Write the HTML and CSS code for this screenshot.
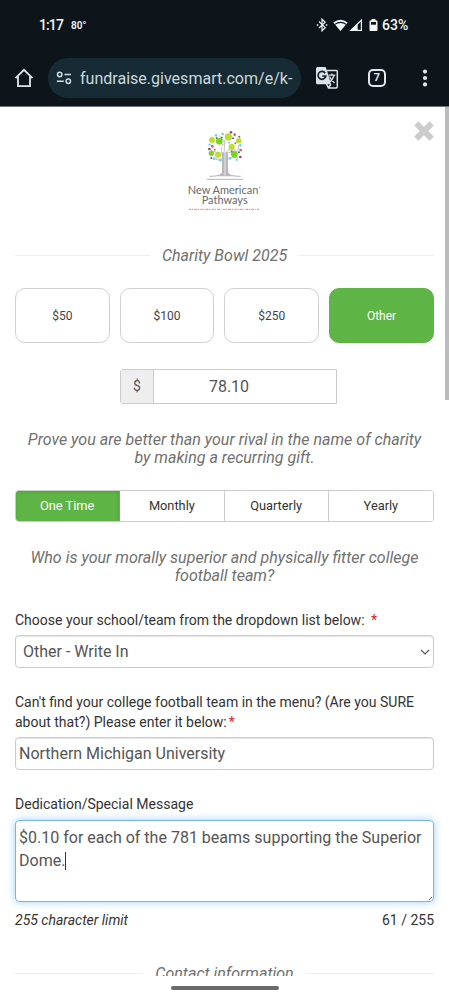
FILE: index.html
```html
<!DOCTYPE html>
<html lang="en">
<head>
<meta charset="utf-8">
<meta name="viewport" content="width=device-width, initial-scale=1">
<title>Charity Bowl 2025</title>
<link rel="stylesheet" href="styles.css">
</head>
<body>
<div class="phone">
  <header class="chrome">
    <div class="status">
      <span class="clock">1:17</span><span class="temp">80°</span>
      <svg class="signals" width="62" height="16" viewBox="0 0 62 16">
        <g fill="none" stroke="#f2f5f6" stroke-width="1.2"><path d="M3 4.500l6.200 6.200L6 13.800V2.200l3.200 3.100L3 11"/></g>
        <path fill="#f2f5f6" d="M.8 7.300h1.500v1.500H.8zM9.800 7.300h1.500v1.500H9.800z"/>
        <path fill="#f2f5f6" d="M17.300 5.500Q24.500-.1 31.700 5.500L24.500 14z"/>
        <path fill="none" stroke="#0d151b" stroke-width="1.100" d="M18.800 7.400Q24.500 3.300 30.200 7.400"/>
        <path fill="none" stroke="#f2f5f6" stroke-width="1.200" d="M34.800 13.400H45.400V3.200z"/>
        <path fill="#f2f5f6" d="M34 14h7.600V6.600z"/>
        <path fill="#f2f5f6" d="M55.500 2h4v1.500h1.300q.7 0 .7.700v9.100q0 .7-.7.700h-6.600q-.7 0-.7-.7V4.200q0-.7.700-.7h1.300z"/>
        <path fill="#0d151b" d="M55 5h5v2.700h-5z"/>
      </svg>
      <span class="battery">63%</span>
    </div>
    <div class="toolbar">
      <svg class="home" width="20" height="20" viewBox="0 0 20 20" fill="none" stroke="#e0e6ec" stroke-width="1.800"><path d="M1.500 10.200L10 1.800l8.500 8.400M4 8.500v9.700h12V8.500"/></svg>
      <div class="address">
        <svg width="16" height="14" viewBox="0 0 16 14" fill="none" stroke="#cfdde2" stroke-width="1.500"><circle cx="3.700" cy="3.500" r="2.200"/><path d="M8.500 3.500H15M.8 10.300h7"/><circle cx="12.300" cy="10.300" r="2.200"/></svg>
        <span>fundraise.givesmart.com/e/k-</span>
      </div>
      <svg class="translate" width="24" height="24" viewBox="0 0 24 24">
        <path fill="#dce2ea" d="M2.500 1h8l1.400 3.500 4.200 13.800H2.500Q1 18.300 1 16.800V2.500Q1 1 2.500 1z"/>
        <path fill="none" stroke="#dce2ea" stroke-width="1.500" d="M11.500 4.500H21q1.300 0 1.300 1.300v14.900q0 1.300-1.300 1.300h-7.500l-2-4M16 18l-2.600 4"/>
        <path fill="none" stroke="#17232c" stroke-width="1.700" d="M10.200 7.200A3.900 3.900 0 1 0 10.800 10H7.200"/>
        <path fill="none" stroke="#dce2ea" stroke-width="1.300" d="M13.500 9.200h6.800M16.800 7.600v1.600M19 9.500q-1.300 4.300-4.500 6.500M14.500 10.500q2 4.200 5 6.500"/>
      </svg>
      <span class="tabs">7</span>
      <svg class="menu" width="6" height="18" viewBox="0 0 6 18" fill="#e0e6ec"><circle cx="3" cy="2.600" r="2.100"/><circle cx="3" cy="9" r="2.100"/><circle cx="3" cy="15.400" r="2.100"/></svg>
    </div>
  </header>

  <main class="page">
    <div class="scrollbar"></div>
    <svg class="close" width="22" height="22" viewBox="0 0 22 22"><path d="M3.300 3.300l15.400 15.400M18.700 3.300L3.300 18.700" stroke="#ccc" stroke-width="6"/></svg>
    <svg class="logo" width="110" height="105" viewBox="0 0 330 315">
      <g fill="none" stroke="#c4c4c7" stroke-width="3">
        <path d="M158 180V125q0-10-12-12l-18-4q-8-2-8-10M155 114V95M158 132h-28M163 180V75M168 180V110l12-12M172 180v-40q0-12 14-12h18M174 112h22q9 0 9-12V90M163 92l-25-14M168 86l-20-25M155 135q-18 2-18-8M176 105h22"/>
        <path stroke="#b4b4b7" stroke-width="3" d="M110 193h110M118 184q38 0 40-12M212 184q-38 0-40-12"/>
      </g>
      <path fill="#b9b9bb" d="M156 112h18v56q1 12 15 16h-48q15-4 15-16z"/>
      <path stroke="#fff" stroke-width="2" d="M165 108v74"/>
      <g fill="#bbdf2c"><circle cx="126" cy="75" r="9"/><circle cx="175" cy="66" r="11"/><circle cx="206" cy="77" r="8"/><circle cx="185" cy="95" r="9"/><circle cx="144" cy="119" r="9"/></g>
      <g fill="#76d51c"><circle cx="148" cy="79" r="10"/><circle cx="124" cy="115" r="8"/><circle cx="193" cy="118" r="10"/></g>
      <g fill="#6fd4ee"><circle cx="138" cy="61" r="4"/><circle cx="158" cy="57" r="4"/><circle cx="119" cy="89" r="3.500"/><circle cx="211" cy="91" r="4"/><circle cx="132" cy="131" r="4"/><circle cx="151" cy="136" r="4"/><circle cx="180" cy="130" r="4"/><circle cx="200" cy="134" r="3.500"/><circle cx="177" cy="83" r="3"/></g>
      <g fill="#974a76"><circle cx="183" cy="52" r="4"/><circle cx="208" cy="65" r="3"/><circle cx="118" cy="102" r="4"/><circle cx="211" cy="126" r="4"/><circle cx="140" cy="69" r="3"/></g>
      <g fill="#e65a36"><circle cx="194" cy="59" r="4"/><circle cx="127" cy="94" r="4"/><circle cx="134" cy="104" r="3"/><circle cx="196" cy="85" r="3"/><circle cx="185" cy="109" r="3"/><circle cx="212" cy="105" r="4"/></g>
      <g fill="#435ccb"><circle cx="189" cy="70" r="3"/><circle cx="155" cy="68" r="3"/><circle cx="124" cy="129" r="3"/><circle cx="207" cy="112" r="3"/></g>
      <g fill="#68696c" font-family="Lato, sans-serif" font-size="34">
        <text x="53" y="238" textLength="212" lengthAdjust="spacingAndGlyphs">New American</text><text x="95" y="268" textLength="138" lengthAdjust="spacingAndGlyphs">Pathways</text>
      </g>
      <path d="M269 214v6" stroke="#777" stroke-width="2"/>
      <path d="M57 283h210" stroke="#d98b79" stroke-width="3" stroke-dasharray="7 2 4 3 9 2 3 4"/>
    </svg>
    <h1 class="divider"><span>Charity Bowl 2025</span></h1>
    <div class="amounts">
      <button>$50</button><button>$100</button><button>$250</button><button class="selected">Other</button>
    </div>
    <div class="custom"><span class="currency">$</span><span class="value">78.10</span></div>
    <p class="prompt recurring">Prove you are better than your rival in the name of charity<br>by making a recurring gift.</p>
    <div class="frequency">
      <button class="active">One Time</button><button>Monthly</button><button>Quarterly</button><button>Yearly</button>
    </div>
    <p class="prompt rival">Who is your morally superior and physically fitter college<br>football team?</p>
    <div class="label">Choose your school/team from the dropdown list below: <span class="required spaced">*</span></div>
    <div class="field select"><span>Other - Write In</span><svg width="10" height="7" viewBox="0 0 10 7" fill="none" stroke="#555" stroke-width="1.100"><path d="M1 1l4 4 4-4"/></svg></div>
    <div class="label second">Can't find your college football team in the menu? (Are you SURE<br>about that?) Please enter it below:<span class="required near">*</span></div>
    <div class="field">Northern Michigan University</div>
    <div class="label third">Dedication/Special Message</div>
    <div class="message">$0.10 for each of the 781 beams supporting the Superior<br>Dome.<span class="caret"></span><svg class="grip" width="3" height="3"><path d="M0 3l3-3" stroke="#666"/></svg></div>
    <div class="limit"><em>255 character limit</em><span>61 / 255</span></div>
    <h2 class="divider contact"><span>Contact information</span></h2>
  </main>
  <footer class="gesture"><div></div></footer>
</div>
</body>
</html>
```
FILE: styles.css
```css
* { box-sizing: border-box; }
body { margin: 0; background: #fff; font-family: Roboto, "Liberation Sans", sans-serif; }
button { font-family: inherit; margin: 0; padding: 0; }
.phone { width: 449px; height: 1000px; display: flex; flex-direction: column; overflow: hidden; background: #fff; }
.chrome { height: 107px; flex: none; background: #0d151b; border-bottom: 1px solid #69757a; }
.status { display: flex; align-items: center; height: 50px; padding: 0 39px 0 39px; color: #f2f5f6; }
.clock { width: 32px; font-size: 14px; font-weight: 500; letter-spacing: -0.9px; white-space: nowrap; }
.temp { font-size: 10px; font-weight: 600; }
.signals { margin-left: auto; margin-right: 4px; }
.battery { font-size: 14px; font-weight: 500; width: 28px; white-space: nowrap; }
.toolbar { display: flex; align-items: center; height: 56px; padding-left: 14px; }
.home { margin-right: 14px; }
.address { width: 253px; height: 40px; display: flex; align-items: center; gap: 8px; padding-left: 8px; border-radius: 20px; background: #172b34; color: #cbd9df; font-size: 16.05px; white-space: nowrap; }
.translate { margin-left: 14px; }
.tabs { width: 18px; height: 18px; margin-left: 29px; border: 2px solid #e0e6ec; border-radius: 5px; color: #e0e6ec; font-size: 11px; font-weight: 700; line-height: 14px; text-align: center; }
.menu { margin-left: 36px; }
.page { position: relative; height: 869px; flex: none; overflow: hidden; padding: 8px 15px 0; color: #333; }
.scrollbar { position: absolute; top: 0; right: 0; width: 4px; height: 293px; background: #bcbcbc; }
.close { position: absolute; top: 13px; left: 413px; }
.logo { display: block; margin: 0 auto; }
.divider { display: flex; align-items: center; gap: 12px; height: 24px; margin: 23px 0 0; color: #707070; font-size: 16px; font-weight: 400; font-style: italic; white-space: nowrap; }
.divider::before, .divider::after { content: ""; flex: 1; height: 1px; background: #eee; }
.amounts { display: grid; grid-template-columns: repeat(3, 94.7px) 1fr; gap: 10px; margin-top: 21px; }
.amounts button { height: 55px; border: 1px solid #d0d0d0; border-radius: 10px; background: #fff; color: #444; font-size: 12px; }
.amounts .selected { background: #5fb446; border-color: #5fb446; color: #fff; }
.custom { display: flex; width: 217px; height: 35px; margin: 26px auto 0 105px; border: 1px solid #ccc; border-radius: 3px 0 0 3px; color: #555; font-size: 16px; line-height: 33px; text-align: center; }
.currency { width: 33px; background: #eee; border-right: 1px solid #ccc; font-size: 14px; }
.value { flex: 1; padding-right: 32px; }
.prompt { margin: 27px 0 0; color: #707070; font-size: 16.05px; font-style: italic; line-height: 17.5px; text-align: center; white-space: nowrap; }
.frequency { display: grid; grid-template-columns: repeat(4, 1fr); height: 32px; margin-top: 24px; border: 1px solid #ccc; border-radius: 4px; overflow: hidden; }
.frequency button { border: 0; border-right: 1px solid #ccc; padding-bottom: 2px; background: #fff; color: #333; font-size: 12.8px; }
.frequency button:last-child { border-right: 0; }
.frequency .active { margin: -1px 0 -1px -1px; background: #5fb446; border-color: #5fb446; color: #fff; box-shadow: inset 0 2px 4px #4aa536; }
.label { margin-top: 26px; font-size: 14.02px; line-height: 20px; white-space: nowrap; }
.required { color: #e02020; }
.spaced { margin-left: 3px; }
.near { margin-left: 2px; }
.field { height: 33px; margin-top: 5px; padding: 0 3px; border: 1px solid #ccc; border-radius: 4px; box-shadow: inset 0 1px 1px #e5e5e5; color: #555; font-size: 16px; line-height: 32px; }
.select { display: flex; align-items: center; justify-content: space-between; padding: 1px 3px 0 7px; }
.second { margin-top: 24px; }
.third { margin-top: 24px; }
.message { position: relative; height: 82px; margin-top: 6px; padding: 5px 3px; border: 1px solid #7bb5e7; border-radius: 4px; box-shadow: 0 0 8px #9dcff3; color: #555; font-size: 16.03px; line-height: 23px; white-space: nowrap; }
.caret { display: inline-block; width: 1px; height: 18px; background: #333; vertical-align: -4px; }
.grip { position: absolute; right: 1px; bottom: 1px; }
.limit { display: flex; justify-content: space-between; margin-top: 8px; font-size: 14px; line-height: 20px; }
.contact { margin-top: 31px; }
.gesture { height: 24px; display: flex; justify-content: center; padding-top: 10px; }
.gesture div { width: 108px; height: 4px; border-radius: 2px; background: #6b6b6b; }
```
